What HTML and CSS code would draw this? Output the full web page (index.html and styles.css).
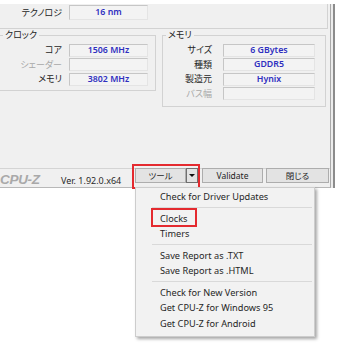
FILE: index.html
```html
<!DOCTYPE html>
<html lang="ja">
<head>
    <meta charset="UTF-8">
    <title>CPU-Z ツール</title>
    <link rel="stylesheet" href="styles.css">
</head>
<body>
    <div class="frame">
        <div class="window">
            <div class="gpu-box">
                <div class="row">
                    <span class="lbl">テクノロジ</span>
                    <span class="val">16 nm</span>
                </div>
            </div>

            <div class="groups">
                <fieldset class="group clock">
                    <legend>クロック</legend>
                    <div class="row"><span class="lbl">コア</span><span class="val">1506 MHz</span></div>
                    <div class="row"><span class="lbl off">シェーダー</span><span class="val"></span></div>
                    <div class="row"><span class="lbl">メモリ</span><span class="val">3802 MHz</span></div>
                </fieldset>
                <fieldset class="group memory">
                    <legend>メモリ</legend>
                    <div class="row"><span class="lbl">サイズ</span><span class="val">6 GBytes</span></div>
                    <div class="row"><span class="lbl">種類</span><span class="val">GDDR5</span></div>
                    <div class="row"><span class="lbl">製造元</span><span class="val">Hynix</span></div>
                    <div class="row"><span class="lbl off">バス幅</span><span class="val"></span></div>
                </fieldset>
            </div>

            <div class="statusbar">
                <span class="logo">CPU-Z</span>
                <span class="ver">Ver. 1.92.0.x64</span>
                <div class="split">
                    <button class="btn tools">ツール</button>
                    <button class="btn arrow"><span class="tri"></span></button>
                </div>
                <button class="btn validate">Validate</button>
                <button class="btn close">閉じる</button>
            </div>
        </div>
        <div class="edge"></div>
    </div>

    <div class="menu">
        <div class="item">Check for Driver Updates</div>
        <div class="sep"></div>
        <div class="item"><span class="mark">Clocks</span></div>
        <div class="item">Timers</div>
        <div class="sep"></div>
        <div class="item">Save Report as .TXT</div>
        <div class="item">Save Report as .HTML</div>
        <div class="sep"></div>
        <div class="item">Check for New Version</div>
        <div class="item">Get CPU-Z for Windows 95</div>
        <div class="item">Get CPU-Z for Android</div>
    </div>
</body>
</html>
```

FILE: styles.css
```css
* {
    box-sizing: border-box;
}
body {
    margin: 0;
    width: 340px;
    height: 346px;
    overflow: hidden;
    background: #fff;
    font-family: "Noto Sans", "Noto Sans CJK JP", sans-serif;
    color: #1e1e1e;
}
.frame {
    display: flex;
    margin-top: 4px;
}
.window {
    width: 331px;
    height: 184px;
    background: #f0f0f0;
    border-right: 1px solid #a9a9a9;
    border-bottom: 1px solid #b8b8b8;
    display: flex;
    flex-direction: column;
}
.edge {
    width: 4px;
    background: #ececec;
    border-right: 2px solid #8c8c8c;
}
.gpu-box {
    width: 328px;
    height: 25px;
    padding-top: 1px;
    border-right: 1px solid #d2d2d2;
    border-bottom: 1px solid #d2d2d2;
}
.row {
    display: grid;
    align-items: center;
    height: 14.5px;
}
.gpu-box .row {
    grid-template-columns: 62px 79px;
    column-gap: 7px;
    height: 15px;
}
.gpu-box .val {
    height: 15px;
    line-height: 13px;
}
.groups {
    display: flex;
    align-items: flex-start;
}
.group {
    margin: 0;
    padding: 2px 0 3px;
    min-width: 0;
    border: 1px solid #d2d2d2;
}
.group legend {
    padding: 0 2px;
    font-family: "Noto Sans CJK JP", sans-serif;
    font-feature-settings: "palt";
    font-size: 9px;
    line-height: 12px;
}
.clock {
    margin-left: -4px;
    width: 160px;
}
.clock legend {
    margin-left: 6px;
}
.clock .row {
    grid-template-columns: 65px 79px;
    column-gap: 7px;
}
.memory {
    margin-left: 6px;
    width: 164px;
    padding-bottom: 5px;
}
.memory legend {
    margin-left: 3px;
}
.memory .row {
    grid-template-columns: 49px 92px;
    column-gap: 11px;
}
.lbl {
    text-align: right;
    white-space: nowrap;
    font-family: "Noto Sans CJK JP", sans-serif;
    font-feature-settings: "palt";
    font-size: 9px;
    line-height: 12px;
}
.lbl.off {
    color: #a8a8a8;
}
.val {
    height: 13px;
    border: 1px solid;
    border-color: #c6c6c6 #e4e4e4 #e4e4e4 #c6c6c6;
    background: #f3f3f3;
    color: #2f2fc0;
    font-size: 8.8px;
    font-weight: 600;
    line-height: 11px;
    text-align: center;
    white-space: nowrap;
}
.statusbar {
    display: flex;
    height: 19px;
    margin-top: auto;
    border-top: 1px solid #d4d4d4;
}
.logo {
    align-self: flex-end;
    width: 61px;
    font: italic bold 13.5px "Liberation Sans", sans-serif;
    line-height: 15px;
    letter-spacing: -0.3px;
    color: #a9a9a9;
}
.ver {
    align-self: flex-end;
    width: 74px;
    font-size: 9px;
    line-height: 13px;
    color: #2a2a2a;
}
.btn {
    height: 15px;
    margin-top: -1px;
    padding: 0;
    border: 1px solid #adadad;
    background: #e3e3e3;
    color: #1e1e1e;
    font-family: "Noto Sans", "Noto Sans CJK JP", sans-serif;
    font-size: 8.5px;
    line-height: 13px;
}
.split {
    display: flex;
    position: relative;
    width: 63px;
}
.split::after {
    content: "";
    position: absolute;
    left: -3px;
    right: -2px;
    top: -5px;
    bottom: -2px;
    border: 2px solid #e42a2f;
}
.tools {
    width: 51px;
    font-feature-settings: "palt";
}
.arrow {
    width: 12px;
    border-color: #707070;
    display: flex;
    align-items: center;
    justify-content: center;
}
.tri {
    border-left: 3px solid transparent;
    border-right: 3px solid transparent;
    border-top: 3px solid #111;
}
.validate {
    width: 61px;
    margin-left: 4px;
}
.close {
    width: 63px;
    margin-left: 3px;
    font-feature-settings: "palt";
}
.menu {
    position: relative;
    z-index: 1;
    width: 180px;
    margin-left: 135px;
    margin-top: -1px;
    padding: 1px 0 5px;
    background: #f2f2f2;
    border: 1px solid #cdcdcd;
    box-shadow: 2px 2px 3px rgba(0, 0, 0, 0.35);
}
.item {
    height: 15.5px;
    padding-left: 24px;
    font-size: 9.2px;
    line-height: 15.5px;
    color: #262626;
    white-space: nowrap;
}
.sep {
    display: flex;
    align-items: center;
    height: 6px;
    padding: 0 2px 0 16px;
}
.sep::before {
    content: "";
    flex: 1;
    height: 1px;
    background: #d9d9d9;
}
.mark {
    position: relative;
}
.mark::after {
    content: "";
    position: absolute;
    left: -9px;
    right: -10px;
    top: -4px;
    bottom: -2px;
    border: 2px solid #e42a2f;
}
```
